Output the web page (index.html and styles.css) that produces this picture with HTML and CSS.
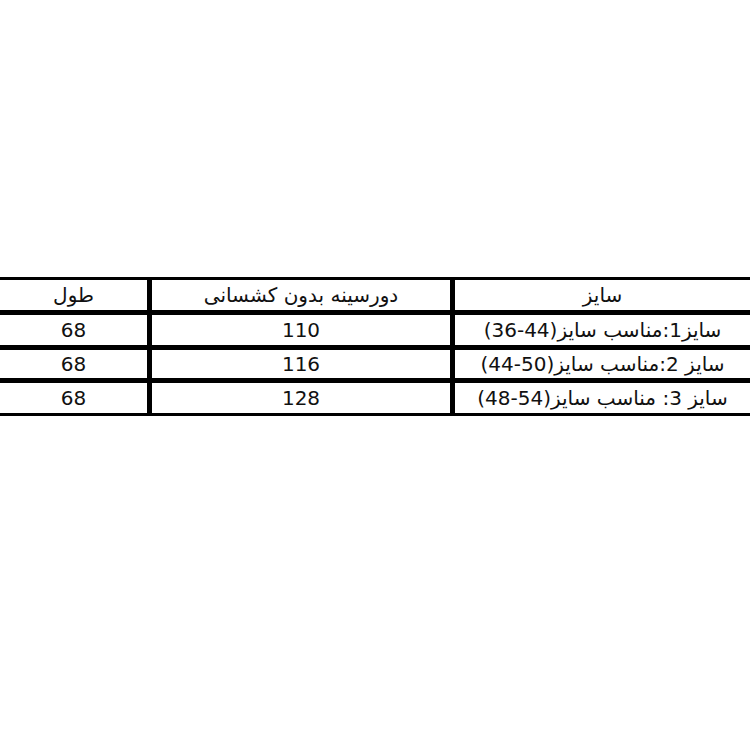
FILE: index.html
```html
<!DOCTYPE html>
<html lang="fa">
<head>
<meta charset="utf-8">
<link rel="stylesheet" href="styles.css">
</head>
<body>
<div class="sheet" dir="rtl">
  <div class="cell">سایز</div>
  <div class="cell">دورسینه بدون کشسانی</div>
  <div class="cell">طول</div>

  <div class="cell">سایز1:مناسب سایز(44-36)</div>
  <div class="cell">110</div>
  <div class="cell">68</div>

  <div class="cell">سایز 2:مناسب سایز(50-44)</div>
  <div class="cell">116</div>
  <div class="cell">68</div>

  <div class="cell">سایز 3: مناسب سایز(54-48)</div>
  <div class="cell">128</div>
  <div class="cell">68</div>
</div>
</body>
</html>
```
FILE: styles.css
```css
html, body {
  margin: 0;
  padding: 0;
  background: #fff;
}
body {
  width: 750px;
  height: 750px;
  overflow: hidden;
}
.sheet {
  margin-top: 277px;
  display: grid;
  grid-template-columns: 295px 298px 147px;
  grid-template-rows: 30px 30px 28px 30px;
  column-gap: 5px;
  row-gap: 5px;
  padding: 3px 0;
  background: #000;
  width: 750px;
}
.cell {
  background: #fff;
  color: #111;
  font-family: "DejaVu Sans", sans-serif;
  font-size: 20px;
  display: flex;
  align-items: center;
  justify-content: center;
  white-space: nowrap;
  overflow: visible;
}
```
